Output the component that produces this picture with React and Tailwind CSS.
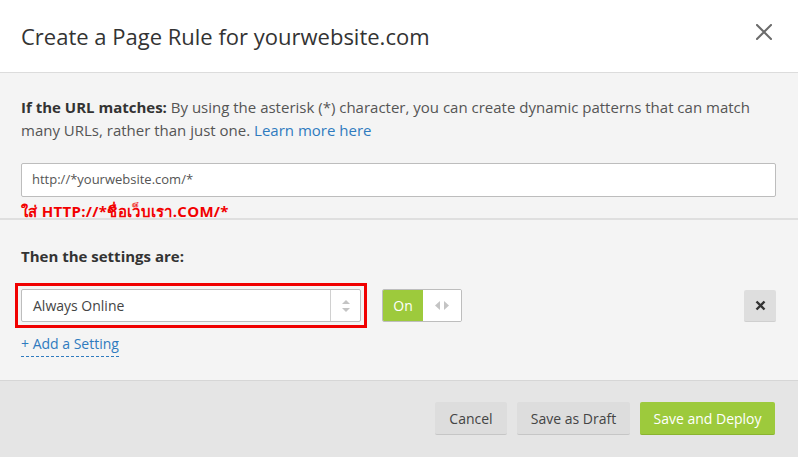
const font = { fontFamily: '"Open Sans", "Noto Sans", sans-serif' }

function CloseIcon() {
  return (
    <svg width="16" height="16" viewBox="0 0 16 16" className="text-[#6b6b6b]">
      <path d="M1 1 L15 15 M15 1 L1 15" stroke="currentColor" strokeWidth="2" strokeLinecap="square" />
    </svg>
  )
}

function RemoveIcon() {
  return (
    <svg width="11" height="11" viewBox="0 0 11 11" className="text-[#333]">
      <path d="M1.5 1.5 L9.5 9.5 M9.5 1.5 L1.5 9.5" stroke="currentColor" strokeWidth="2.4" />
    </svg>
  )
}

function UpDown() {
  return (
    <svg width="8" height="14" viewBox="0 0 8 14" className="text-[#c4c4c4]">
      <path d="M0 5 L4 1 L8 5 Z" fill="currentColor" />
      <path d="M0 9 L4 13 L8 9 Z" fill="currentColor" />
    </svg>
  )
}

function LeftRight() {
  return (
    <svg width="14" height="9" viewBox="0 0 14 9" className="text-[#c4c4c4]">
      <path d="M5 0 L0 4.5 L5 9 Z" fill="currentColor" />
      <path d="M9 0 L14 4.5 L9 9 Z" fill="currentColor" />
    </svg>
  )
}

export default function App() {
  return (
    <div className="w-[798px] h-[457px] bg-white text-[#333] flex flex-col overflow-hidden" style={font}>
      <header className="h-[73px] shrink-0 flex items-center justify-between pl-[21px] pr-[26px] border-b border-[#dcdcdc]">
        <h1 className="text-[22px] text-[#333]">Create a Page Rule for yourwebsite.com</h1>
        <span className="-mt-[8px]">
          <CloseIcon />
        </span>
      </header>

      <section className="h-[147px] shrink-0 bg-[#f4f4f4] border-b-2 border-[#dfdfdf] pl-[21px] pr-[22px] pt-[23px]">
        <p className="text-[15px] leading-[23px] text-[#555]">
          <span className="font-bold text-[#333]">If the URL matches:</span> By using the asterisk (*) character, you can create dynamic patterns that can match many URLs, rather than just one. <span className="text-[#2f7bbf]">Learn more here</span>
        </p>
        <div className="mt-[21px] h-[34px] bg-white border border-[#bdbdbd] rounded-[2px] flex items-center px-[10px] text-[13px] text-[#555]">
          http://*yourwebsite.com/*
        </div>
        <p className="mt-[4px] text-[15px] leading-[20px] font-bold text-[#f20000] tracking-[0.3px]">ใส่ HTTP://*ชื่อเว็บเรา.COM/*</p>
      </section>

      <section className="flex-1 bg-[#f4f4f4] border-b border-[#d6d6d6] px-[21px] pt-[26px]">
        <p className="text-[15px] font-bold text-[#333] leading-[20px]">Then the settings are:</p>
        <div className="mt-[17px] flex items-center">
          <div className="-ml-[6px] border-[3px] border-[#f00000] p-[3px]">
            <div className="w-[340px] h-[33px] bg-white border border-[#bdbdbd] rounded-[2px] flex items-center">
              <span className="flex-1 pl-[11px] text-[14px] text-[#444]">Always Online</span>
              <span className="w-[30px] h-full border-l border-[#d0d0d0] flex items-center justify-center">
                <UpDown />
              </span>
            </div>
          </div>
          <div className="ml-[15px] w-[80px] h-[33px] flex border border-[#bdbdbd] rounded-[2px] overflow-hidden">
            <span className="w-[40px] bg-[#9dca3c] text-white text-[14px] flex items-center justify-center">On</span>
            <span className="flex-1 bg-white flex items-center justify-center">
              <LeftRight />
            </span>
          </div>
          <div className="ml-auto mr-[1px] w-[32px] h-[32px] bg-[#dedede] rounded-[2px] border-b border-[#cfcfcf] flex items-center justify-center">
            <RemoveIcon />
          </div>
        </div>
        <span className="inline-block mt-[6px] text-[14px] leading-[20px] text-[#2f7bbf] border-b border-dashed border-[#2f7bbf] pb-[2px]">+ Add a Setting</span>
      </section>

      <footer className="h-[76px] shrink-0 bg-[#e5e5e5] flex items-center justify-end gap-[10px] pr-[23px] pb-[1px]">
        <button className="w-[72px] h-[33px] bg-[#dddddd] border-b border-[#c6c6c6] rounded-[2px] text-[14px] text-[#444]">Cancel</button>
        <button className="w-[113px] h-[33px] bg-[#dddddd] border-b border-[#c6c6c6] rounded-[2px] text-[14px] text-[#444]">Save as Draft</button>
        <button className="w-[135px] h-[33px] bg-[#9dca3c] border-b border-[#8ab42f] rounded-[2px] text-[14px] text-white">Save and Deploy</button>
      </footer>
    </div>
  )
}
